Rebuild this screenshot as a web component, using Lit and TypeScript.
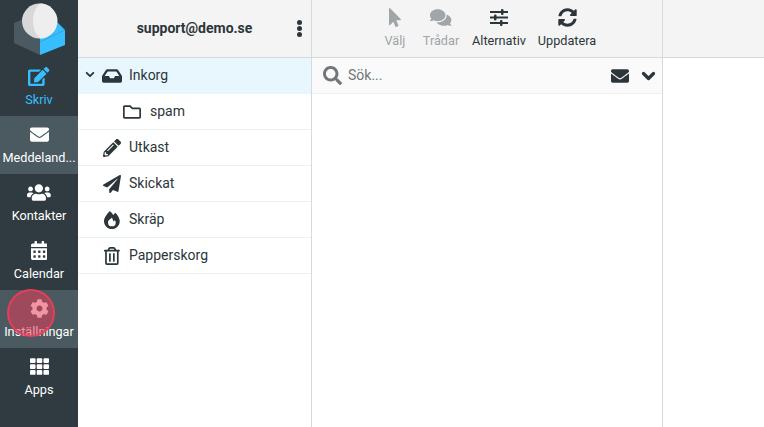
import { LitElement, html, css, svg } from "lit";
import { customElement } from "lit/decorators.js";

const P: Record<string, [number, string]> = {
  edit: [576, "M402.6 83.2l90.2 90.2c3.8 3.8 3.8 10 0 13.8L274.4 405.6l-92.8 10.3c-12.4 1.4-22.9-9.1-21.5-21.5l10.3-92.8L388.8 83.2c3.8-3.8 10-3.8 13.8 0zm162-22.9l-48.8-48.8c-15.2-15.2-39.9-15.2-55.2 0l-35.4 35.4c-3.8 3.8-3.8 10 0 13.8l90.2 90.2c3.8 3.8 10 3.8 13.8 0l35.4-35.4c15.2-15.3 15.2-40 0-55.2zM384 346.2V448H64V128h229.8c3.2 0 6.2-1.3 8.5-3.5l40-40c7.6-7.6 2.2-20.5-8.5-20.5H48C21.5 64 0 85.5 0 112v352c0 26.5 21.5 48 48 48h352c26.5 0 48-21.5 48-48V306.2c0-10.7-12.9-16-20.5-8.5l-40 40c-2.2 2.3-3.5 5.3-3.5 8.5z"],
  envelope: [512, "M502.3 190.8c3.9-3.1 9.7-.2 9.7 4.7V400c0 26.5-21.5 48-48 48H48c-26.5 0-48-21.5-48-48V195.6c0-5 5.7-7.8 9.7-4.7 22.4 17.4 52.1 39.5 154.1 113.6 21.1 15.4 56.7 47.8 92.2 47.6 35.7.3 72-32.8 92.3-47.6 102-74.1 131.6-96.3 154-113.7zM256 320c23.2.4 56.6-29.2 73.4-41.4 132.7-96.3 142.8-104.7 173.4-128.7 5.8-4.5 9.2-11.5 9.2-18.9v-19c0-26.5-21.5-48-48-48H48C21.5 64 0 85.5 0 112v19c0 7.4 3.4 14.3 9.2 18.9 30.6 23.9 40.7 32.4 173.4 128.7 16.8 12.2 50.2 41.8 73.4 41.4z"],
  users: [640, "M96 224c35.3 0 64-28.7 64-64s-28.7-64-64-64-64 28.7-64 64 28.7 64 64 64zm448 0c35.3 0 64-28.7 64-64s-28.7-64-64-64-64 28.7-64 64 28.7 64 64 64zm32 32h-64c-17.6 0-33.5 7.1-45.1 18.6 40.3 22.1 68.9 62 75.1 109.4h66c17.7 0 32-14.3 32-32v-32c0-35.3-28.7-64-64-64zm-256 0c61.9 0 112-50.1 112-112S381.9 32 320 32 208 82.1 208 144s50.1 112 112 112zm76.8 32h-8.3c-20.8 10-43.9 16-68.5 16s-47.6-6-68.5-16h-8.3C179.6 288 128 339.6 128 403.2V432c0 26.5 21.5 48 48 48h288c26.5 0 48-21.5 48-48v-28.8c0-63.6-51.6-115.2-115.2-115.2zm-223.7-13.4C161.5 263.1 145.6 256 128 256H64c-35.3 0-64 28.7-64 64v32c0 17.7 14.3 32 32 32h65.9c6.3-47.4 34.9-87.3 75.2-109.4z"],
  calendar: [448, "M0 464c0 26.5 21.5 48 48 48h352c26.5 0 48-21.5 48-48V192H0v272zm320-196c0-6.6 5.4-12 12-12h40c6.6 0 12 5.4 12 12v40c0 6.6-5.4 12-12 12h-40c-6.6 0-12-5.4-12-12v-40zm0 128c0-6.6 5.4-12 12-12h40c6.6 0 12 5.4 12 12v40c0 6.6-5.4 12-12 12h-40c-6.6 0-12-5.4-12-12v-40zM192 268c0-6.6 5.4-12 12-12h40c6.6 0 12 5.4 12 12v40c0 6.6-5.4 12-12 12h-40c-6.6 0-12-5.4-12-12v-40zm0 128c0-6.6 5.4-12 12-12h40c6.6 0 12 5.4 12 12v40c0 6.6-5.4 12-12 12h-40c-6.6 0-12-5.4-12-12v-40zM64 268c0-6.6 5.4-12 12-12h40c6.6 0 12 5.4 12 12v40c0 6.6-5.4 12-12 12H76c-6.6 0-12-5.4-12-12v-40zm0 128c0-6.6 5.4-12 12-12h40c6.6 0 12 5.4 12 12v40c0 6.6-5.4 12-12 12H76c-6.6 0-12-5.4-12-12v-40zM400 64h-48V16c0-8.8-7.2-16-16-16h-32c-8.8 0-16 7.2-16 16v48H160V16c0-8.8-7.2-16-16-16h-32c-8.8 0-16 7.2-16 16v48H48C21.5 64 0 85.5 0 112v48h448v-48c0-26.5-21.5-48-48-48z"],
  cog: [512, "M487.4 315.7l-42.6-24.6c4.3-23.2 4.3-47 0-70.2l42.6-24.6c4.9-2.8 7.1-8.6 5.5-14-11.1-35.6-30-67.8-54.7-94.6-3.8-4.1-10-5.1-14.8-2.3L380.8 110c-17.9-15.4-38.5-27.3-60.8-35.1V25.8c0-5.6-3.9-10.5-9.4-11.7-36.7-8.2-74.3-7.8-109.2 0-5.5 1.2-9.4 6.1-9.4 11.7V75c-22.2 7.9-42.8 19.8-60.8 35.1L88.7 85.5c-4.9-2.8-11-1.9-14.8 2.3-24.7 26.7-43.6 58.9-54.7 94.6-1.7 5.4.6 11.2 5.5 14L67.3 221c-4.3 23.2-4.3 47 0 70.2l-42.6 24.6c-4.9 2.8-7.1 8.6-5.5 14 11.1 35.6 30 67.8 54.7 94.6 3.8 4.1 10 5.1 14.8 2.3l42.6-24.6c17.9 15.4 38.5 27.3 60.8 35.1v49.2c0 5.6 3.9 10.5 9.4 11.7 36.7 8.2 74.3 7.8 109.2 0 5.5-1.2 9.4-6.1 9.4-11.7v-49.2c22.2-7.9 42.8-19.8 60.8-35.1l42.6 24.6c4.9 2.8 11 1.9 14.8-2.3 24.7-26.7 43.6-58.9 54.7-94.6 1.5-5.5-.7-11.3-5.6-14.1zM256 336c-44.1 0-80-35.9-80-80s35.9-80 80-80 80 35.9 80 80-35.9 80-80 80z"],
  th: [512, "M149.3 56v80c0 13.3-10.7 24-24 24H24c-13.3 0-24-10.7-24-24V56c0-13.3 10.7-24 24-24h101.3c13.3 0 24 10.7 24 24zm181.4 240v-80c0-13.3-10.7-24-24-24H205.3c-13.3 0-24 10.7-24 24v80c0 13.3 10.7 24 24 24h101.4c13.3 0 24-10.7 24-24zm32-240v80c0 13.3 10.7 24 24 24H488c13.3 0 24-10.7 24-24V56c0-13.3-10.7-24-24-24H386.7c-13.3 0-24 10.7-24 24zm-32 80V56c0-13.3-10.7-24-24-24H205.3c-13.3 0-24 10.7-24 24v80c0 13.3 10.7 24 24 24h101.4c13.3 0 24-10.7 24-24zm-205.4 56H24c-13.3 0-24 10.7-24 24v80c0 13.3 10.7 24 24 24h101.3c13.3 0 24-10.7 24-24v-80c0-13.3-10.7-24-24-24zM0 376v80c0 13.3 10.7 24 24 24h101.3c13.3 0 24-10.7 24-24v-80c0-13.3-10.7-24-24-24H24c-13.3 0-24 10.7-24 24zm386.7-56H488c13.3 0 24-10.7 24-24v-80c0-13.3-10.7-24-24-24H386.7c-13.3 0-24 10.7-24 24v80c0 13.3 10.7 24 24 24zm0 160H488c13.3 0 24-10.7 24-24v-80c0-13.3-10.7-24-24-24H386.7c-13.3 0-24 10.7-24 24v80c0 13.3 10.7 24 24 24zM181.3 376v80c0 13.3 10.7 24 24 24h101.4c13.3 0 24-10.7 24-24v-80c0-13.3-10.7-24-24-24H205.3c-13.3 0-24 10.7-24 24z"],
  inbox: [576, "M567.938 243.908L462.25 85.374A48.003 48.003 0 0 0 422.311 64H153.689a48 48 0 0 0-39.938 21.374L8.062 243.908A47.994 47.994 0 0 0 0 270.533V400c0 26.51 21.49 48 48 48h480c26.51 0 48-21.49 48-48V270.533a47.994 47.994 0 0 0-8.062-26.625zM162.252 128h251.497l85.333 128H376l-32 64H232l-32-64H76.918l85.334-128z"],
  folder: [512, "M464 128H272l-54.63-54.63c-6-6-14.14-9.37-22.63-9.37H48C21.49 64 0 85.49 0 112v288c0 26.51 21.49 48 48 48h416c26.51 0 48-21.49 48-48V176c0-26.51-21.49-48-48-48zm0 272H48V112h140.12l54.63 54.63c6 6 14.14 9.37 22.63 9.37H464v224z"],
  pencil: [512, "M497.9 142.1l-46.1 46.1c-4.7 4.7-12.3 4.7-17 0l-111-111c-4.7-4.7-4.7-12.3 0-17l46.1-46.1c18.7-18.7 49.1-18.7 67.9 0l60.1 60.1c18.8 18.7 18.8 49.1 0 67.9zM284.2 99.8L21.6 362.4.4 483.9c-2.9 16.4 11.4 30.6 27.8 27.8l121.5-21.3 262.6-262.6c4.7-4.7 4.7-12.3 0-17l-111-111c-4.8-4.7-12.4-4.7-17.1 0zM124.1 339.9c-5.5-5.5-5.5-14.3 0-19.8l154-154c5.5-5.5 14.3-5.5 19.8 0s5.5 14.3 0 19.8l-154 154c-5.5 5.5-14.3 5.5-19.8 0zM88 424h48v36.3l-64.5 11.3-31.1-31.1L51.7 376H88v48z"],
  plane: [512, "M476 3.2L12.5 270.6c-18.1 10.4-15.8 35.6 2.2 43.2L121 358.4l287.3-253.2c5.5-4.9 13.3 2.6 8.6 8.3L176 407v80.5c0 23.6 28.5 32.9 42.5 15.8L282 426l124.6 52.2c14.2 6 30.4-2.9 33-18.2l72-432C515 7.8 493.3-6.8 476 3.2z"],
  fire: [448, "M323.56 51.2c-20.8 19.3-39.58 39.59-56.22 59.97C240.08 73.62 206.28 35.53 168 0 69.74 91.17 0 209.96 0 281.6 0 408.85 100.29 512 224 512s224-103.15 224-230.4c0-53.27-51.98-163.14-124.44-230.4zM224 185c-15 35-110 70-110 140a110 110 0 0 0 220 0c0-25-12-45-25-62l-35 35z"],
  trash: [448, "M268 416h24a12 12 0 0 0 12-12V188a12 12 0 0 0-12-12h-24a12 12 0 0 0-12 12v216a12 12 0 0 0 12 12zM432 80h-82.41l-34-56.7A48 48 0 0 0 274.41 0H173.59a48 48 0 0 0-41.16 23.3L98.41 80H16A16 16 0 0 0 0 96v16a16 16 0 0 0 16 16h16v336a48 48 0 0 0 48 48h288a48 48 0 0 0 48-48V128h16a16 16 0 0 0 16-16V96a16 16 0 0 0-16-16zM171.84 50.91A6 6 0 0 1 177 48h94a6 6 0 0 1 5.15 2.91L293.61 80H154.39zM368 464H80V128h288zm-212-48h24a12 12 0 0 0 12-12V188a12 12 0 0 0-12-12h-24a12 12 0 0 0-12 12v216a12 12 0 0 0 12 12z"],
  pointer: [320, "M302.189 329.126H196.105l55.831 135.993c3.889 9.428-.555 19.999-9.444 23.999l-49.165 21.427c-9.165 4-19.443-.571-23.332-9.714l-53.053-129.136-86.664 89.138C18.729 472.71 0 463.554 0 447.977V18.299C0 1.899 19.921-6.096 30.277 5.443l284.412 292.542c11.472 11.179 3.007 31.141-12.5 31.141z"],
  comments: [576, "M416 192c0-88.4-93.1-160-208-160S0 103.6 0 192c0 34.3 14.1 65.9 38 92-13.4 30.2-35.5 54.2-35.8 54.5-2.2 2.3-2.8 5.7-1.5 8.7S4.8 352 8 352c36.6 0 66.9-12.3 88.7-25 32.2 15.7 70.3 25 111.3 25 114.9 0 208-71.6 208-160zm122 220c23.9-26 38-57.7 38-92 0-66.9-53.5-124.2-129.3-148.1.9 6.6 1.3 13.3 1.3 20.1 0 105.9-107.7 192-240 192-10.8 0-21.3-.8-31.7-1.9C207.8 439.6 281.8 480 368 480c41 0 79.1-9.2 111.3-25 21.8 12.7 52.1 25 88.7 25 3.2 0 6.1-1.9 7.3-4.8 1.3-2.9.7-6.3-1.5-8.7-.3-.3-22.4-24.2-35.8-54.5z"],
  sync: [512, "M370.72 133.28C339.458 104.008 298.888 87.962 255.848 88c-77.458.068-144.328 53.178-162.791 126.85-1.344 5.363-6.122 9.15-11.651 9.15H24.103c-7.498 0-13.194-6.807-11.807-14.176C33.933 94.924 134.813 8 256 8c66.448 0 126.791 26.136 171.315 68.685L463.03 40.97C478.149 25.851 504 36.559 504 57.941V192c0 13.255-10.745 24-24 24H345.941c-21.382 0-32.09-25.851-16.971-40.971l41.75-41.749zM32 296h134.059c21.382 0 32.09 25.851 16.971 40.971l-41.75 41.75c31.262 29.273 71.835 45.319 114.876 45.28 77.418-.07 144.315-53.144 162.787-126.849 1.344-5.363 6.122-9.15 11.651-9.15h57.304c7.498 0 13.194 6.807 11.807 14.176C478.067 417.076 377.187 504 256 504c-66.448 0-126.791-26.136-171.315-68.685L48.97 471.03C33.851 486.149 8 475.441 8 454.059V320c0-13.255 10.745-24 24-24z"],
  search: [512, "M505 442.7L405.3 343c-4.5-4.5-10.6-7-17-7H372c27.6-35.3 44-79.7 44-128C416 93.1 322.9 0 208 0S0 93.1 0 208s93.1 208 208 208c48.3 0 92.7-16.4 128-44v16.3c0 6.4 2.5 12.5 7 17l99.7 99.7c9.4 9.4 24.6 9.4 33.9 0l28.3-28.3c9.4-9.4 9.4-24.6.1-34zM208 336c-70.7 0-128-57.2-128-128 0-70.7 57.2-128 128-128 70.7 0 128 57.2 128 128 0 70.7-57.2 128-128 128z"],
};

function icon(name: string, h: number, cls = "") {
  const [vw, d] = P[name];
  const w = (h * vw) / 512;
  return html`<svg class=${cls} width=${w} height=${h} viewBox="0 0 ${vw} 512" fill="currentColor" fill-rule="evenodd"><path d=${d}></path></svg>`;
}

const chevron = (sw: number, w: number, h: number) => html`<svg width=${w} height=${h} viewBox="0 0 12 8" fill="none" stroke="currentColor" stroke-width=${sw} stroke-linecap="round" stroke-linejoin="round"><path d="M2 2l4 4 4-4"></path></svg>`;

const rail = [
  { icon: "edit", h: 19, label: "Skriv", cls: "compose" },
  { icon: "envelope", h: 19, label: "Meddeland...", cls: "on" },
  { icon: "users", h: 19, label: "Kontakter", cls: "" },
  { icon: "calendar", h: 19, label: "Calendar", cls: "" },
  { icon: "cog", h: 19, label: "Inställningar", cls: "on" },
  { icon: "th", h: 19, label: "Apps", cls: "" },
];

const folders = [
  { icon: "inbox", h: 18, label: "Inkorg", cls: "sel", open: true },
  { icon: "folder", h: 18, label: "spam", cls: "sub" },
  { icon: "pencil", h: 18, label: "Utkast", cls: "" },
  { icon: "plane", h: 18, label: "Skickat", cls: "" },
  { icon: "fire", h: 18, label: "Skräp", cls: "" },
  { icon: "trash", h: 18, label: "Papperskorg", cls: "" },
];

const tools = [
  { icon: "pointer", h: 19, label: "Välj", off: true, w: 46 },
  { icon: "comments", h: 19, label: "Trådar", off: true, w: 46 },
  { icon: "sliders", h: 19, label: "Alternativ", off: false, w: 70 },
  { icon: "sync", h: 19, label: "Uppdatera", off: false, w: 66 },
];

const logo = svg`<svg width="78" height="58" viewBox="0 0 78 58">
  <polygon points="14,23 40,12 40,55 14,43" fill="#4b5a61"></polygon>
  <polygon points="40,42 65,30 65,45 40,55" fill="#37beff"></polygon>
  <polygon points="55,20 65,30 40,42 40,30" fill="#37beff"></polygon>
  <circle cx="39.5" cy="21" r="17.5" fill="#d8d8d8"></circle>
  <path d="M40 3.5a17.5 17.5 0 0 1 0 35c-5-5-7-11-7-17.5s2-13 7-17.5z" fill="#eeeeee"></path>
</svg>`;

const sliders = html`<svg width="20" height="19" viewBox="0 0 20 19" fill="#2c363a">
  <rect x="1" y="3" width="18" height="2"></rect><rect x="12" y="1" width="2.5" height="6" rx="1"></rect>
  <rect x="1" y="8.5" width="18" height="2"></rect><rect x="5" y="6.5" width="2.5" height="6" rx="1"></rect>
  <rect x="1" y="14" width="18" height="2"></rect><rect x="11" y="12" width="2.5" height="6" rx="1"></rect>
</svg>`;

@customElement("app-root")
export class AppRoot extends LitElement {
  static styles = css`
    :host {
      display: block;
      height: 100vh;
      overflow: hidden;
      font-family: Roboto, "Liberation Sans", sans-serif;
      color: #2c363a;
      background: #fff;
    }
    .app { display: flex; height: 427px; position: relative; }
    .rail { width: 78px; flex: none; background: #2f3b40; color: #fff; display: flex; flex-direction: column; }
    .logo { height: 58px; }
    .logo svg { display: block; }
    .ri { height: 58px; display: flex; flex-direction: column; align-items: center; padding-top: 9px; box-sizing: border-box; gap: 6px; font-size: 12.7px; line-height: 16px; }
    .ri svg { display: block; }
    .ri .t { white-space: nowrap; text-align: center; }
    .ri.on { background: #4a5a60; }
    .ri.compose { color: #37beff; }
    .folders { width: 233px; flex: none; border-right: 1px solid #d4dbde; display: flex; flex-direction: column; }
    .fh { height: 58px; box-sizing: border-box; border-bottom: 1px solid #d4dbde; background: #f4f4f4; display: flex; align-items: center; position: relative; font-size: 14px; font-weight: 700; justify-content: center; padding-bottom: 2px; }
    .dots { position: absolute; right: 9px; top: 20px; display: flex; flex-direction: column; gap: 1px; }
    .dots i { width: 5px; height: 5px; border-radius: 50%; background: #2c363a; display: block; }
    .fi { height: 36px; box-sizing: border-box; border-bottom: 1px solid #eef1f2; display: flex; align-items: center; font-size: 14px; position: relative; padding-left: 24px; gap: 7px; }
    .fi .ic { width: 20px; display: flex; justify-content: center; flex: none; }
    .fi .l { margin-bottom: 2px; }
    .fi.sel { background: #e8f6fd; border-bottom-color: #e8f6fd; }
    .fi.sub { padding-left: 44px; gap: 8px; }
    .exp { position: absolute; left: 7px; top: 13px; display: block; line-height: 0; }
    .main { flex: 1; display: flex; flex-direction: column; min-width: 0; }
    .tb { height: 58px; box-sizing: border-box; border-bottom: 1px solid #d4dbde; background: #f4f4f4; display: flex; }
    .tools { width: 351px; box-sizing: border-box; border-right: 1px solid #d4dbde; display: flex; padding-left: 60px; }
    .ti { display: flex; flex-direction: column; align-items: center; padding-top: 8px; gap: 7px; font-size: 12.7px; line-height: 14px; white-space: nowrap; }
    .ti .gl { height: 19px; display: flex; align-items: center; }
    .ti.off { color: #a0a5a7; }
    .body { flex: 1; display: flex; }
    .list { width: 351px; box-sizing: border-box; border-right: 1px solid #d4dbde; }
    .search { height: 36px; box-sizing: border-box; background: #fafafa; border-bottom: 1px solid #eef1f2; display: flex; align-items: center; padding: 0 6px 0 11px; font-size: 14px; color: #6f7779; gap: 6px; }
    .search .s { flex: 1; margin-bottom: 2px; }
    .search .g { color: #6f7779; display: block; }
    .search .e { color: #2c363a; display: block; }
    .search .ch { color: #2c363a; line-height: 0; margin-left: 6px; }
    .touch { position: absolute; left: 7px; top: 289px; width: 48px; height: 48px; box-sizing: border-box; border-radius: 50%; background: rgba(230, 60, 90, 0.55); border: 2px solid rgba(240, 60, 90, 0.85); pointer-events: none; }
  `;

  render() {
    return html`<div class="app">
      <nav class="rail">
        <div class="logo">${logo}</div>
        ${rail.map((r) => html`<div class="ri ${r.cls}">${icon(r.icon, r.h)}<div class="t">${r.label}</div></div>`)}
      </nav>
      <section class="folders">
        <div class="fh">support@demo.se<div class="dots"><i></i><i></i><i></i></div></div>
        ${folders.map((f) => html`<div class="fi ${f.cls}">
          ${f.open ? html`<span class="exp">${chevron(2.2, 10, 7)}</span>` : ""}
          <span class="ic">${icon(f.icon, f.h)}</span><span class="l">${f.label}</span>
        </div>`)}
      </section>
      <section class="main">
        <div class="tb">
          <div class="tools">
            ${tools.map((t) => html`<div class="ti ${t.off ? "off" : ""}" style="width:${t.w}px">
              <span class="gl">${t.icon === "sliders" ? sliders : icon(t.icon, t.h)}</span><span>${t.label}</span>
            </div>`)}
          </div>
        </div>
        <div class="body">
          <div class="list">
            <div class="search">
              ${icon("search", 19, "g")}<span class="s">Sök...</span>
              ${icon("envelope", 18, "e")}<span class="ch">${chevron(2.6, 15, 10)}</span>
            </div>
          </div>
        </div>
      </section>
      <div class="touch"></div>
    </div>`;
  }
}
